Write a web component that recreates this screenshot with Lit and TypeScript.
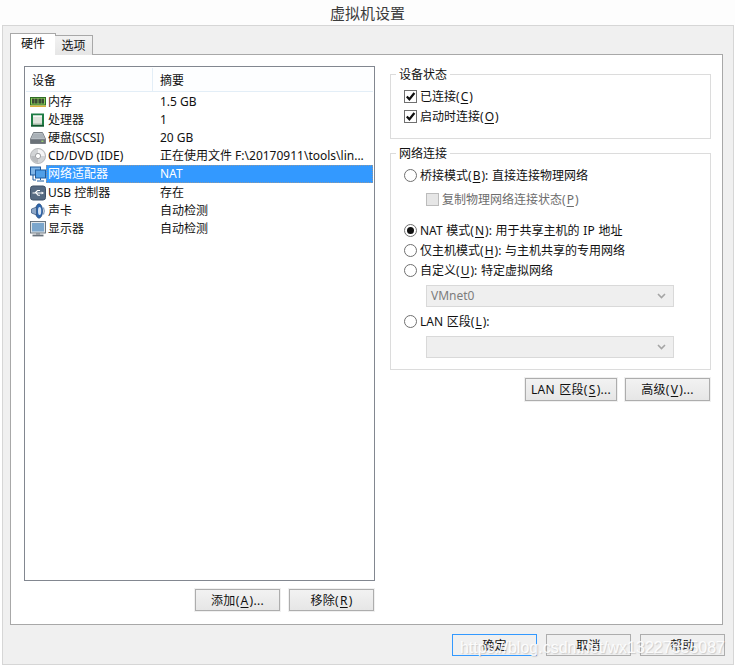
import { LitElement, html, css, svg } from "lit";
import { customElement } from "lit/decorators.js";

const icons: Record<string, unknown> = {
  mem: svg`<rect x="0" y="3" width="16" height="8.5" fill="#2f6d24"/><rect x="1" y="4" width="14" height="6.5" fill="#8ccf5c"/><rect x="2" y="4.6" width="2.6" height="5" fill="#3b4a34"/><rect x="5" y="4.6" width="2.6" height="5" fill="#3b4a34"/><rect x="8.4" y="4.6" width="2.6" height="5" fill="#3b4a34"/><rect x="11.4" y="4.6" width="2.6" height="5" fill="#3b4a34"/><rect x="0" y="11.5" width="16" height="1.5" fill="#d8b13a"/>`,
  cpu: svg`<rect x="1" y="1.5" width="13" height="13" fill="#1f7d45"/><rect x="1" y="13" width="13" height="1.5" fill="#14552f"/><rect x="3" y="3.5" width="9" height="9" fill="#dfe4dc"/><rect x="3" y="3.5" width="9" height="1.2" fill="#fff"/><rect x="3" y="11.4" width="9" height="1.1" fill="#b3bbb0"/>`,
  hdd: svg`<path d="M3.5 2.5h9L15.5 9v4.5H.5V9z" fill="#c5cace" stroke="#5f666c" stroke-width=".8"/><path d="M3.5 3.5h9l2 5h-13z" fill="#aab1b7"/><rect x="1" y="9.2" width="14" height="4" fill="#6a7178"/><rect x="11.4" y="10.6" width="2" height="1.3" fill="#9fe06a"/>`,
  cd: svg`<circle cx="8" cy="8" r="7.6" fill="#d2d4d6" stroke="#a3a5a8" stroke-width=".7"/><path d="M8 1.2a6.8 6.8 0 0 1 6.8 6.8H11a3 3 0 0 0-3-3z" fill="#f4f4f5"/><path d="M8 14.8A6.8 6.8 0 0 1 1.2 8H5a3 3 0 0 0 3 3z" fill="#b9bbbe"/><circle cx="8" cy="8" r="2.6" fill="#fff" stroke="#8b8d90" stroke-width=".8"/>`,
  net: svg`<rect x="0.5" y="1" width="10" height="8" fill="#7fb4e6" stroke="#1f5a9c"/><rect x="5.5" y="4" width="10" height="8" fill="#4f9fe8" stroke="#1f5a9c"/><path d="M10.5 12v2M7 15h7M3 9v5h3" stroke="#1f5a9c" fill="none"/>`,
  usb: svg`<rect x="0.5" y="1" width="15" height="14" rx="2.5" fill="#566a82" stroke="#3f5168"/><path d="M2.5 8h9.5M5 8l2.5-2.5H10M6 8l2 2.2h2" stroke="#fff" stroke-width="1.1" fill="none"/><path d="M14 8l-2.4-1.6v3.2z" fill="#fff"/>`,
  snd: svg`<ellipse cx="9" cy="8" rx="3.6" ry="7.2" fill="#2f66ad" stroke="#1e4677" stroke-width=".7"/><ellipse cx="9.6" cy="8" rx="1.6" ry="4" fill="#d5e4f5"/><path d="M6.5 4L1.5 6v4l5 2z" fill="#8fa8c8" stroke="#34537c" stroke-width=".7"/><path d="M13.5 4.5q1.6 3.5 0 7" stroke="#7d99bd" stroke-width="1.2" fill="none"/>`,
  mon: svg`<rect x=".5" y=".5" width="15" height="11.5" fill="#dfe5ea" stroke="#5e6973" stroke-width=".9"/><rect x="2" y="2" width="12" height="8.5" fill="#7ba6cc"/><rect x="6" y="12" width="4" height="1.6" fill="#8e979f"/><rect x="2.5" y="13.6" width="11" height="1.8" fill="#69727b"/>`,
};

const rows: [string, unknown, string, boolean?][] = [
  ["mem", "内存", "1.5 GB"],
  ["cpu", "处理器", "1"],
  ["hdd", "硬盘(SCSI)", "20 GB"],
  ["cd", "CD/DVD (IDE)", "正在使用文件 F:\\20170911\\tools\\lin..."],
  ["net", "网络适配器", "NAT", true],
  ["usb", "USB 控制器", "存在"],
  ["snd", "声卡", "自动检测"],
  ["mon", "显示器", "自动检测"],
];

const check = html`<svg viewBox="0 0 11 11" width="11" height="11"><path d="M1.8 5.5l2.6 2.8L9.4 2" fill="none" stroke="#111" stroke-width="2.2"/></svg>`;
const chevron = html`<svg viewBox="0 0 9 6" width="9" height="6"><path d="M1 1l3.5 3.5L8 1" fill="none" stroke="#a5a5a5" stroke-width="1.6"/></svg>`;

@customElement("app-root")
export class AppRoot extends LitElement {
  static styles = css`
    :host {
      display: block;
      position: relative;
      width: 735px;
      height: 667px;
      overflow: hidden;
      background: #fff;
      color: #111;
      font-family: "Noto Sans", "Noto Sans CJK SC", sans-serif;
      font-size: 12px;
      line-height: 16px;
    }
    u { text-underline-offset: 2px; margin: 0 1px; }
    .title {
      height: 25px;
      background: #fdfdfd;
      display: flex;
      align-items: center;
      justify-content: center;
      font-size: 15px;
      color: #3c3c3c;
      padding-top: 1px;
      box-sizing: border-box;
      font-family: "Noto Sans CJK SC", sans-serif;
    }
    .body {
      box-sizing: border-box;
      margin-left: 2px;
      width: 732px;
      height: 640px;
      border: 1px solid #d6d6d6;
      background: #f0f0f0;
      padding: 7px 8px 0 7px;
    }
    .tabs { display: flex; align-items: flex-end; height: 22px; margin-bottom: -1px; position: relative; z-index: 1; }
    .tab {
      box-sizing: border-box;
      display: flex;
      align-items: center;
      justify-content: center;
      border: 1px solid #a8a8a8;
    }
    .tab.on { width: 46px; height: 22px; background: #fff; border-bottom: none; padding-bottom: 1px; }
    .tab.off { width: 38px; height: 20px; margin-left: -1px; background: linear-gradient(#f2f2f2, #e6e6e6); border-bottom: none; border-left: none; }
    .pane {
      box-sizing: border-box;
      width: 713px;
      height: 571px;
      background: #fff;
      border: 1px solid #a8a8a8;
      padding: 11px 13px 0;
      display: grid;
      grid-template-columns: 351px 321px;
      column-gap: 15px;
      align-items: start;
    }
    .list {
      box-sizing: border-box;
      height: 515px;
      border: 1px solid #828790;
      padding: 1px;
    }
    .head {
      display: flex;
      height: 23px;
      align-items: center;
      border-bottom: 1px solid #e3eef7;
      background: #fdfeff;
    }
    .head span { padding: 2px 0 0 6px; box-sizing: border-box; height: 100%; display: flex; align-items: center; }
    .head .c1 { width: 127px; border-right: 1px solid #e3eef7; }
    .head .c2 { flex: 1; padding-left: 7px; }
    .rows { padding-top: 1px; }
    .row { display: flex; height: 18.1px; align-items: center; }
    .ico { width: 16px; height: 16px; margin-left: 4px; flex: none; display: block; }
    .cells { display: flex; flex: 1; height: 100%; align-items: center; padding-left: 2px; box-sizing: border-box; }
    .cells .a { width: 112px; flex: none; white-space: nowrap; }
    .cells .b { white-space: nowrap; }
    .row.sel .cells { background: #3399ff; color: #fff; outline: 1px dotted rgba(220, 150, 80, 0.55); outline-offset: -1px; }
    .btns { display: flex; justify-content: flex-end; gap: 9px; margin-top: 8px; padding-right: 1px; }
    .btn {
      box-sizing: border-box;
      width: 85px;
      height: 22px;
      padding-top: 1px;
      display: flex;
      align-items: center;
      justify-content: center;
      border: 1px solid #adadad;
      outline: 1px solid #f0f0f0;
      background: linear-gradient(#f2f2f2, #e6e6e6);
      white-space: nowrap;
      letter-spacing: 0.3px;
      word-spacing: 1px;
    }
    .btn.wide { width: 92px; height: 23px; }
    .btn.tall { height: 23px; }
    .btn.def { border-color: #3399ff; }
    fieldset {
      margin: 0 0 6px;
      padding: 4px 0 12px 13px;
      border: 1px solid #dcdcdc;
      min-width: 0;
      word-spacing: 0.6px;
    }
    legend { padding: 1px 3px 0; margin-left: -8px; line-height: 15px; }
    .opt { display: flex; align-items: center; height: 20px; white-space: pre; }
    .opt > span:last-child:not(.box):not(.radio) { margin-top: 1px; }
    .box {
      box-sizing: border-box;
      width: 13px;
      height: 13px;
      margin-right: 3px;
      border: 1px solid #707070;
      background: #fff;
      flex: none;
      display: flex;
      align-items: center;
      justify-content: center;
    }
    .radio {
      box-sizing: border-box;
      width: 13px;
      height: 13px;
      border-radius: 50%;
      margin-right: 3px;
      border: 1px solid #707070;
      background: #fff;
      flex: none;
      display: flex;
      align-items: center;
      justify-content: center;
    }
    .radio i { width: 7px; height: 7px; border-radius: 50%; background: #111; display: block; }
    .sub { margin: 4px 0 0 22px; color: #6d6d6d; }
    .sub .box { background: #e6e6e6; border-color: #bcbcbc; }
    .nat { margin-top: 11px; }
    .mt4 { margin-top: 4px; }
    .select {
      box-sizing: border-box;
      width: 248px;
      height: 22px;
      margin: 5px 0 0 22px;
      background: #efefef;
      border: 1px solid #d9d9d9;
      color: #7d7d7d;
      display: flex;
      align-items: center;
      justify-content: space-between;
      padding: 0 7px 0 4px;
    }
    .g2 { padding-bottom: 11px; }
    .rbtns { display: flex; justify-content: flex-end; gap: 8px; margin-top: 8px; padding-right: 1px; }
    .foot { display: flex; justify-content: flex-end; gap: 9px; margin-top: 9px; }
    .foot .btn { outline: none; background: #f0f0f0; }
    .mark {
      position: absolute;
      right: 10px;
      top: 638px;
      font-family: "Liberation Sans", sans-serif;
      font-size: 16px;
      line-height: 20px;
      color: rgba(255, 255, 255, 0.9);
      text-shadow: 1px 1px 1px rgba(150, 150, 150, 0.4);
      white-space: nowrap;
    }
  `;

  private opt(cls: string, mark: unknown, a: string, k: string, b: string) {
    return html`<div class="opt ${cls}">${mark}<span>${a}(<u>${k}</u>)${b}</span></div>`;
  }

  render() {
    const box = html`<span class="box">${check}</span>`;
    const empty = html`<span class="box"></span>`;
    const r = html`<span class="radio"></span>`;
    const ron = html`<span class="radio"><i></i></span>`;
    return html`
      <div class="title">虚拟机设置</div>
      <div class="body">
        <div class="tabs">
          <div class="tab on">硬件</div>
          <div class="tab off">选项</div>
        </div>
        <div class="pane">
          <div>
            <div class="list">
              <div class="head"><span class="c1">设备</span><span class="c2">摘要</span></div>
              <div class="rows">
                ${rows.map(
                  ([ic, a, b, sel]) => html`<div class="row ${sel ? "sel" : ""}">
                    <svg class="ico" viewBox="0 0 16 16">${icons[ic]}</svg>
                    <div class="cells"><span class="a">${a}</span><span class="b">${b}</span></div>
                  </div>`
                )}
              </div>
            </div>
            <div class="btns">
              <div class="btn"><span>添加(<u>A</u>)...</span></div>
              <div class="btn"><span>移除(<u>R</u>)</span></div>
            </div>
          </div>
          <div>
            <fieldset>
              <legend>设备状态</legend>
              ${this.opt("", box, "已连接", "C", "")}
              ${this.opt("", box, "启动时连接", "O", "")}
            </fieldset>
            <fieldset class="g2">
              <legend>网络连接</legend>
              ${this.opt("", r, "桥接模式", "B", ": 直接连接物理网络")}
              ${this.opt("sub", empty, "复制物理网络连接状态", "P", "")}
              ${this.opt("nat", ron, "NAT 模式", "N", ": 用于共享主机的 IP 地址")}
              ${this.opt("", r, "仅主机模式", "H", ": 与主机共享的专用网络")}
              ${this.opt("", r, "自定义", "U", ": 特定虚拟网络")}
              <div class="select"><span>VMnet0</span>${chevron}</div>
              ${this.opt("mt4", r, "LAN 区段", "L", ":")}
              <div class="select"><span></span>${chevron}</div>
            </fieldset>
            <div class="rbtns">
              <div class="btn wide"><span>LAN 区段(<u>S</u>)...</span></div>
              <div class="btn tall"><span>高级(<u>V</u>)...</span></div>
            </div>
          </div>
        </div>
        <div class="foot">
          <div class="btn def">确定</div>
          <div class="btn">取消</div>
          <div class="btn">帮助</div>
        </div>
      </div>
      <div class="mark">https://blog.csdn.net/wx13227855087</div>
    `;
  }
}
